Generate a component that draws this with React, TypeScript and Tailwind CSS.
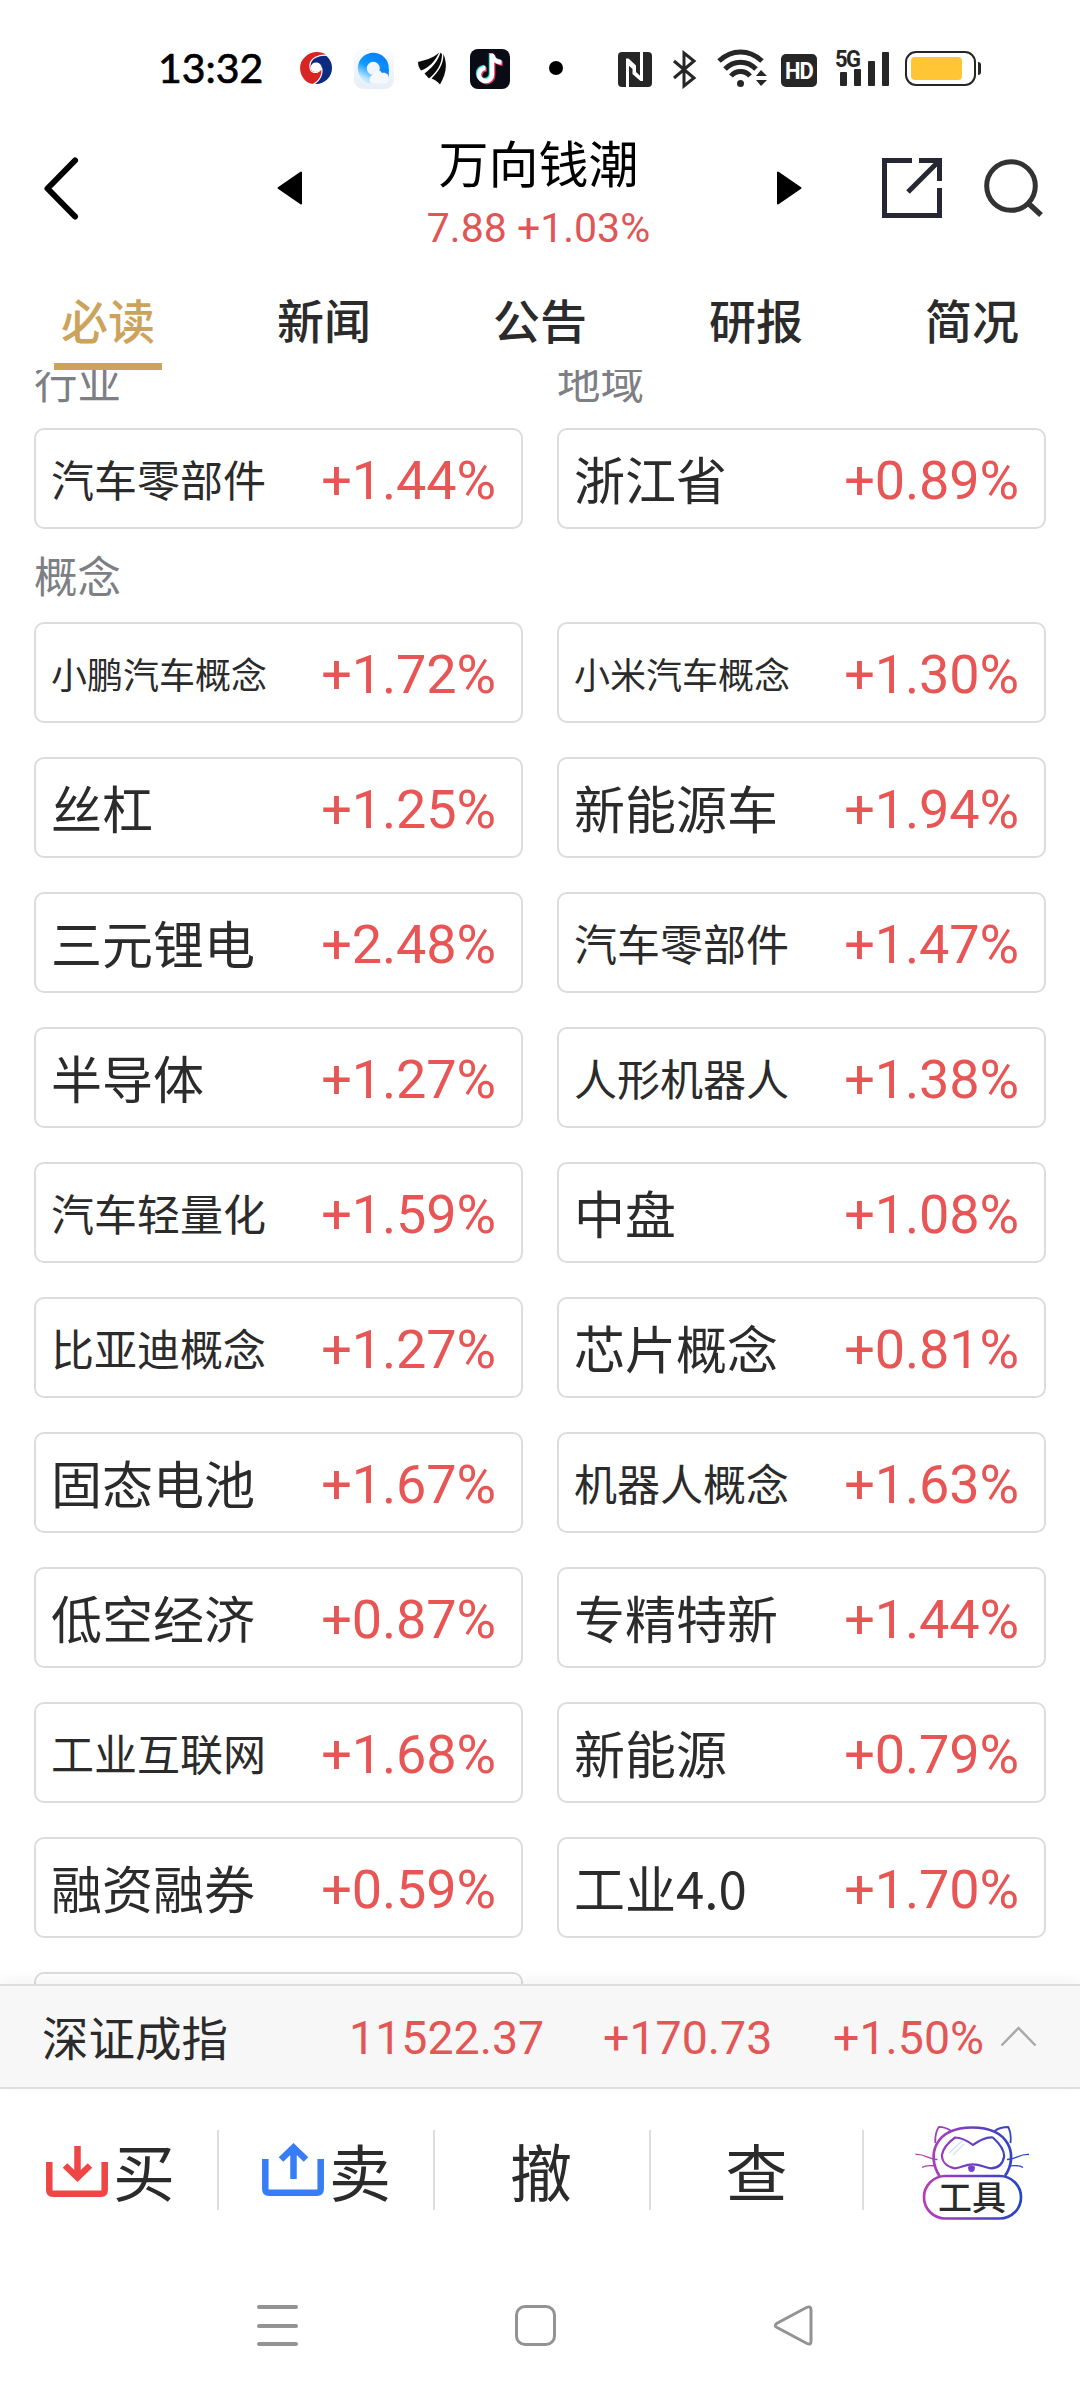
import React from "react";

type Item = { name: string; change: string };

const concepts: Item[] = [
  { name: "小鹏汽车概念", change: "+1.72%" },
  { name: "小米汽车概念", change: "+1.30%" },
  { name: "丝杠", change: "+1.25%" },
  { name: "新能源车", change: "+1.94%" },
  { name: "三元锂电", change: "+2.48%" },
  { name: "汽车零部件", change: "+1.47%" },
  { name: "半导体", change: "+1.27%" },
  { name: "人形机器人", change: "+1.38%" },
  { name: "汽车轻量化", change: "+1.59%" },
  { name: "中盘", change: "+1.08%" },
  { name: "比亚迪概念", change: "+1.27%" },
  { name: "芯片概念", change: "+0.81%" },
  { name: "固态电池", change: "+1.67%" },
  { name: "机器人概念", change: "+1.63%" },
  { name: "低空经济", change: "+0.87%" },
  { name: "专精特新", change: "+1.44%" },
  { name: "工业互联网", change: "+1.68%" },
  { name: "新能源", change: "+0.79%" },
  { name: "融资融券", change: "+0.59%" },
  { name: "工业4.0", change: "+1.70%" },
];

const tabs = ["必读", "新闻", "公告", "研报", "简况"];

function nameSize(name: string) {
  if (name === "工业4.0") return "text-[51px]";
  if (name.length >= 6) return "text-[36px]";
  if (name.length === 5) return "text-[43px]";
  return "text-[51px]";
}

function Card({ name, change }: Item) {
  return (
    <div className="flex h-[101px] items-center justify-between rounded-[10px] border-2 border-[#dcdcdc] bg-white pl-[15px] pr-[25px] whitespace-nowrap">
      <span className={`${nameSize(name)} leading-none text-[#2b2b2b]`}>{name}</span>
      <span className="pt-1 font-[Roboto] text-[54px] leading-none tracking-[-0.1px] text-[#e85555]">{change}</span>
    </div>
  );
}

function StatusBar() {
  return (
    <div className="flex h-[110px] items-start pl-[158px] text-[#262626]">
      <span className="mt-[44px] w-[105px] font-[Lato] text-[41px] leading-[48px] whitespace-nowrap text-black [-webkit-text-stroke:0.7px_#000]">13:32</span>
      <svg className="mt-[52px] ml-[37px]" width="32" height="32" viewBox="0 0 32 32">
        <circle cx="16" cy="16" r="16" fill="#0b2a80" />
        <path d="M28 3.500C20 2 9 6 10 15c0 6 7 8 11.700 1.300C23 22 20 29 13 32.500 5 32-.5 24-.5 16-.5 6 9-1 18-.5c5 .5 8 2 10 4Z" fill="#d92424" stroke="#fff" strokeWidth="1.200" />
        <path d="M10.500 15.500C11 11 16 9 20 12c2 2 2 4 1 5-3 4.500-9.500 4-10.500-1.500Z" fill="#fff" />
      </svg>
      <svg className="mt-[49px] ml-[22px]" width="40" height="40" viewBox="0 0 40 40">
        <defs>
          <linearGradient id="ring" x1="0.7" y1="0" x2="0.2" y2="1">
            <stop offset="0" stopColor="#0a84fb" />
            <stop offset="0.5" stopColor="#109bff" />
            <stop offset="1" stopColor="#bfe8ff" />
          </linearGradient>
          <linearGradient id="tile" x1="0" y1="0" x2="0" y2="1">
            <stop offset="0" stopColor="#fafcff" />
            <stop offset="1" stopColor="#e6eef7" />
          </linearGradient>
        </defs>
        <rect width="40" height="40" rx="9" fill="url(#tile)" />
        <circle cx="19.3" cy="19.3" r="11" fill="none" stroke="url(#ring)" strokeWidth="9" />
        <path d="M27 18l7.800 2v8H27Z" fill="#1187f5" />
        <path d="M18 34.500a5 5 0 0 1 1-9c1-4.500 7-5.500 9-1.500 4-1 7 1.500 7 5.500 0 3-2 5-5 5Z" fill="#f5f9fe" />
      </svg>
      <svg className="mt-[52px] ml-[24px]" width="28" height="34" viewBox="0 0 28 34" fill="#0a0a0a">
        <path d="M0 10C7 8 14 7 21 .5 17 10 10 16 3 18.500 1 16 0 13 0 10Z" />
        <path d="M22.500 .8C19 11 13.500 16 6.500 21.500L11 26.500C19 20 24 12 24 2Z" />
        <path d="M25.300 2C26 11 21 19 13.500 26.500c3 1 6 3 8.500 6 4-7 7-15 5.500-23-.5-3-1-5-2.200-7.500Z" />
      </svg>
      <svg className="mt-[49px] ml-[24px]" width="40" height="40" viewBox="0 0 40 40">
        <rect width="40" height="40" rx="8" fill="#0b0b16" />
        <g fill="none" strokeWidth="4.400">
          <path d="M22 5v20.500a6.500 6.500 0 1 1-6.500-6.500M22 5.500c1 4.500 4.500 7.500 9.500 8" transform="translate(-1 -1)" stroke="#25e5e0" />
          <path d="M22 5v20.500a6.500 6.500 0 1 1-6.500-6.500M22 5.500c1 4.500 4.500 7.500 9.500 8" transform="translate(1.200 1.200)" stroke="#f5365c" />
          <path d="M22 5v20.500a6.500 6.500 0 1 1-6.500-6.500M22 5.500c1 4.500 4.500 7.500 9.500 8" stroke="#fff" />
        </g>
      </svg>
      <span className="mt-[61px] ml-[39px] size-[14px] rounded-full bg-black" />
      <svg className="mt-[52px] ml-[55px]" width="34" height="35" viewBox="0 0 34 35">
        <rect width="34" height="35" rx="4" fill="#262626" />
        <path d="M9.500 35V7.500M23.500 0v28" fill="none" stroke="#fff" strokeWidth="3" />
        <path d="M8 6.500h2.500l7.500 7V20l7 6.500V29h-2.500L14.500 22v-5L8 11Z" fill="#fff" />
      </svg>
      <svg className="mt-[50px] ml-[20px]" width="25" height="39" viewBox="0 0 25 39" fill="none" stroke="#262626" strokeWidth="3">
        <path d="M2 11l20 17-10 8V3l10 8L2 28" />
      </svg>
      <svg className="mt-[48px] ml-[20px]" width="51" height="40" viewBox="0 0 51 40" fill="none" stroke="#262626" strokeWidth="5">
        <path d="M2 13C15 1 32 1 45 13M8 21c9-9 22-9 31 0M14 28c5-6 14-6 19 0" />
        <circle cx="23.500" cy="35.500" r="3.500" fill="#262626" stroke="none" />
        <path d="M39 28l5-6 6 6ZM39 32l5 6 6-6Z" fill="#262626" stroke="none" />
      </svg>
      <span className="mt-[54px] ml-[13px] flex h-[33px] w-[36px] items-center justify-center rounded-[5px] bg-[#262626] pt-px">
        <span className="scale-y-110 font-[Roboto] text-[22px] leading-none font-bold tracking-[-1px] text-white">HD</span>
      </span>
      <div className="relative mt-[49px] ml-[18px] h-[37px] w-[54px]">
        <span className="absolute -top-px left-0 origin-left scale-y-110 font-[Roboto] text-[22px] leading-[22px] font-bold tracking-[-1.500px]">5G</span>
        <div className="flex h-full items-end gap-[7px] pl-[5px]">
          <i className="h-[14px] w-[7px] rounded-[1px] bg-[#262626]" />
          <i className="h-[17px] w-[7px] rounded-[1px] bg-[#262626]" />
          <i className="h-[25px] w-[7px] rounded-[1px] bg-[#262626]" />
          <i className="h-[34px] w-[7px] rounded-[1px] bg-[#262626]" />
        </div>
      </div>
      <div className="mt-[51px] ml-[16px] flex items-center gap-[2px]">
        <div className="h-[35px] w-[71px] rounded-[11px] border-2 border-[#262626] p-1">
          <div className="h-[23px] w-[51px] rounded-[4px] bg-[#ffc535]" />
        </div>
        <i className="h-[13px] w-[3px] rounded-r-sm bg-[#262626]" />
      </div>
    </div>
  );
}

function Header() {
  return (
    <div className="flex h-[162px] items-start">
      <svg className="mt-[47px] ml-[43px]" width="36" height="63" viewBox="0 0 36 63" fill="none" stroke="#000" strokeWidth="6" strokeLinecap="round" strokeLinejoin="round">
        <path d="M32 3.500L4.500 31.500 32 59.500" />
      </svg>
      <svg className="mt-[61px] ml-[198px]" width="25" height="34" viewBox="0 0 25 34">
        <path d="M24 1.500v31L1.500 17Z" stroke="#000" strokeWidth="2" strokeLinejoin="round" />
      </svg>
      <div className="flex w-[475px] flex-col items-center">
        <span className="mt-[22px] pr-[2px] text-[50px] leading-[58px] text-black">万向钱潮</span>
        <span className="mt-[14px] pr-[2px] font-[Roboto] text-[41px] leading-[48px] text-[#e05656]">7.88 +1.03%</span>
      </div>
      <svg className="mt-[61px]" width="25" height="34" viewBox="0 0 25 34">
        <path d="M1 1.500v31L23.500 17Z" stroke="#000" strokeWidth="2" strokeLinejoin="round" />
      </svg>
      <svg className="mt-[48px] ml-[80px]" width="60" height="60" viewBox="0 0 60 60" fill="none" stroke="#272733" strokeWidth="5">
        <path d="M30 2.500H2.500v55h55V30M37 2.500h20.500V23M26 34L57 3" />
      </svg>
      <svg className="mt-[49px] ml-[42px]" width="60" height="60" viewBox="0 0 60 60" fill="none" stroke="#333" strokeWidth="5">
        <circle cx="27" cy="27" r="24.300" />
        <path d="M44 44L57 56" strokeWidth="5.500" />
      </svg>
    </div>
  );
}

function Tabs() {
  return (
    <div className="grid h-[98px] grid-cols-5">
      {tabs.map((t, i) => (
        <div key={t} className="flex flex-col items-center">
          <span className={`mt-[17px] h-[74px] text-[47px] leading-[60px] font-medium ${i === 0 ? "text-[#cca35c]" : "text-[#2b2b2b]"}`}>{t}</span>
          {i === 0 && <span className="h-[7px] w-[108px] bg-[#cca35c]" />}
        </div>
      ))}
    </div>
  );
}

function CatIcon() {
  return (
    <svg width="115" height="95" viewBox="0 0 115 95" fill="none" stroke="url(#cat)" strokeWidth="2.700" strokeLinejoin="round">
      <defs>
        <linearGradient id="cat" gradientUnits="userSpaceOnUse" x1="10" y1="0" x2="106" y2="0">
          <stop offset="0" stopColor="#b63fb4" />
          <stop offset="0.5" stopColor="#6b3fc0" />
          <stop offset="1" stopColor="#2347c4" />
        </linearGradient>
      </defs>
      <path d="M24.500 50C11 29 20 1.500 57.200 1.500S104 29 90 50" />
      <path strokeWidth="1.800" d="M20.300 17C20 10 21 5 23.800 .9 28 1 32 2 36.500 5M79.600 5c4-3 9-4 13.700-4 2.500 5 3 10 2.100 16" />
      <path strokeWidth="2.200" d="M40 11.500c7 0 12 3 17.900 7.500C64 15 70 11 77.800 11.500 84 17 89 23 89.200 30 88 38 83 42 76 42.300 70 42 66 38.300 57.900 38.300S46 42 40 42.300C32 41 27 36 26.900 29 28 22 34 16 40 11.500Z" />
      <path strokeWidth="1.300" d="M.5 28.500c9-1 13 5 22 5M7 41.500c4-3 8-2 14-1.500M114 28.500c-9-1-13 5-22 5M108 41.500c-4-3-9-2-14-1.500" />
      <path stroke="#d3dff8" strokeWidth="1.200" d="M34 27L47 15M38 29l11-11" />
      <path d="M53 41c2-2 5-2 7 0 0 3-1 5-3.500 5S53 44 53 41Z" fill="#7a3fc4" stroke="none" />
      <rect x="9" y="50" width="97" height="42.500" rx="21.200" fill="#fff" />
    </svg>
  );
}

function ActionBar() {
  return (
    <div className="flex h-[161px] items-start pt-[41px] text-[62px] leading-[80px] text-[#2b2b2b]">
      <div className="flex h-20 w-[219px] border-r-2 border-[#dedede] pl-[46px]">
        <svg className="mt-4 mr-[5px]" width="62" height="51" viewBox="0 0 62 51" fill="none" stroke="#ef4545" strokeWidth="6.500">
          <path d="M3.300 16v28q0 3.700 3.700 3.700h48q3.700 0 3.700-3.700V16" />
          <path d="M31.500 0v29M19 19.500L31.500 31.500 44 19.500" />
        </svg>
        <span>买</span>
      </div>
      <div className="flex h-20 w-[216px] border-r-2 border-[#dedede] pl-[43px]">
        <svg className="mt-3 mr-[5px]" width="62" height="55" viewBox="0 0 62 55" fill="none" stroke="#377df5" strokeWidth="6.500">
          <path d="M3.300 17v30q0 3.700 3.700 3.700h48q3.700 0 3.700-3.700V17" />
          <path d="M31.500 37V6M19 17.500L31.500 5.500 44 17.500" />
        </svg>
        <span>卖</span>
      </div>
      <div className="h-20 w-[216px] border-r-2 border-[#dedede] pr-[2px] text-center">撤</div>
      <div className="h-20 w-[213px] border-r-2 border-[#dedede] text-center">查</div>
      <div className="relative -mt-1 ml-[51px] h-[95px] w-[115px]">
        <CatIcon />
        <span className="absolute top-[49px] left-0 w-[114px] text-center text-[34px] leading-[42px] font-medium">工具</span>
      </div>
    </div>
  );
}

export default function App() {
  return (
    <div className="flex h-[2400px] w-[1080px] flex-col overflow-hidden bg-white font-['Noto_Sans_CJK_SC',sans-serif]">
      <StatusBar />
      <Header />
      <Tabs />
      <div className="h-[1614px] overflow-hidden px-[34px]">
        <div className="-mt-[18px] mb-[18px] grid h-[58px] grid-cols-2 gap-x-[34px] text-[43.500px] leading-[58px] text-[#7d7f85]">
          <span>行业</span>
          <span>地域</span>
        </div>
        <div className="grid grid-cols-2 gap-[34px]">
          <Card name="汽车零部件" change="+1.44%" />
          <Card name="浙江省" change="+0.89%" />
        </div>
        <div className="mt-[17px] mb-[18px] h-[58px] text-[43.500px] leading-[58px] text-[#7d7f85]">概念</div>
        <div className="grid grid-cols-2 gap-[34px]">
          {concepts.map((c) => (
            <Card key={c.name} {...c} />
          ))}
          <div className="h-[101px] rounded-[10px] border-2 border-[#dcdcdc]" />
        </div>
      </div>
      <div className="relative flex h-[105px] items-center border-y-2 border-[#dedede] bg-[#f7f7f7] pl-[42px] whitespace-nowrap shadow-[0_-4px_14px_rgba(0,0,0,0.05)]">
        <span className="w-[307px] text-[46.500px] leading-none text-[#2b2b2b]">深证成指</span>
        <div className="flex pt-[3px] font-[Roboto] text-[46.500px] leading-none text-[#e35656]">
          <span className="w-[254px]">11522.37</span>
          <span className="w-[230px]">+170.73</span>
          <span className="w-[167px]">+1.50%</span>
        </div>
        <svg width="37" height="21" viewBox="0 0 37 21" fill="none" stroke="#aaa" strokeWidth="2.500">
          <path d="M1.500 19.500L18.500 2l17 17.500" />
        </svg>
      </div>
      <ActionBar />
      <div className="flex h-[150px] items-start pt-[55px] pl-[257px]">
        <div className="flex h-[41px] w-[41px] flex-col justify-between">
          <i className="h-1 rounded-sm bg-[#939393]" />
          <i className="h-1 rounded-sm bg-[#939393]" />
          <i className="h-1 rounded-sm bg-[#939393]" />
        </div>
        <div className="ml-[217px] size-[41px] rounded-[10px] border-3 border-[#939393]" />
        <svg className="ml-[217px]" width="41" height="41" viewBox="0 0 41 41" fill="none" stroke="#939393" strokeWidth="3">
          <path d="M33.500 2.500Q38 .500 38 5v31q0 4.500-4 2.500L4 22.500Q.500 20.500 4 18.300Z" />
        </svg>
      </div>
    </div>
  );
}
